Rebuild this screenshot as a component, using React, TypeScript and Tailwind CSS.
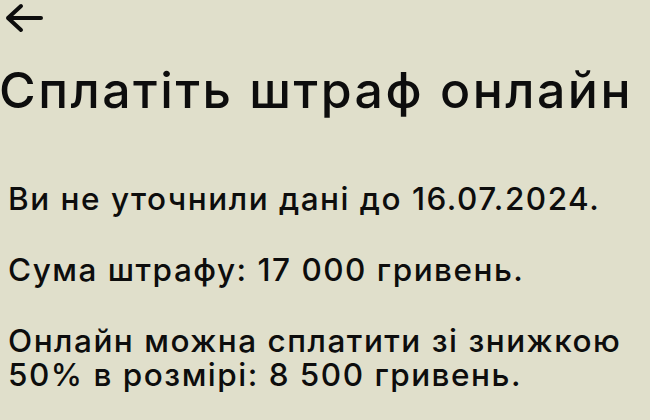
export default function App() {
  return (
    <div
      className="w-[650px] h-[420px] overflow-hidden bg-[#e0dfcb] text-[#0d0d0d] font-medium"
      style={{ fontFamily: 'Inter, "Liberation Sans", sans-serif' }}
    >
      <div className="pl-[3px] pt-[3px] h-[40px]">
        <svg width="40" height="30" viewBox="0 0 40 30" fill="none">
          <path d="M38 15H5M18 3L5 15l13 12" stroke="#0d0d0d" strokeWidth="4" strokeLinecap="round" strokeLinejoin="round" />
        </svg>
      </div>
      <h1 className="mt-[22px] -ml-[1px] text-[50px] leading-[56px] tracking-[2.5px] whitespace-nowrap">Сплатіть штраф онлайн</h1>
      <div className="mt-[64px] pl-[8px] text-[31.5px] leading-[34px] tracking-[1.5px] flex flex-col gap-[37px]">
        <p>Ви не уточнили дані до 16.07.2024.</p>
        <p>Сума штрафу: 17 000 гривень.</p>
        <p className="whitespace-nowrap">
          Онлайн можна сплатити зі знижкою
          <br />
          50% в розмірі: 8 500 гривень.
        </p>
      </div>
    </div>
  );
}
